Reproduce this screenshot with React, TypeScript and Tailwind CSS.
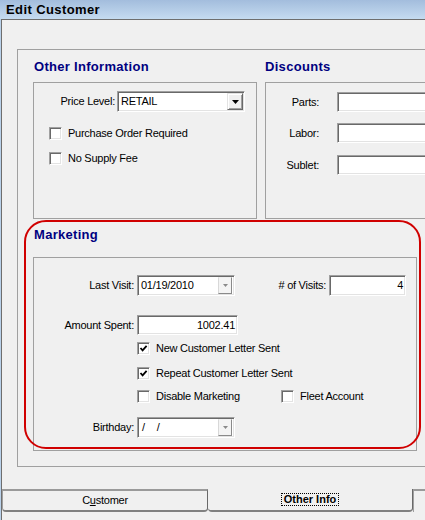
import React from "react";

const sunken =
  "bg-white border border-t-[#a0a0a0] border-l-[#a0a0a0] border-b-white border-r-white shadow-[inset_1px_1px_0_#696969,inset_-1px_-1px_0_#e3e3e3]";
const raised =
  "bg-[#f0f0f0] border border-t-[#e3e3e3] border-l-[#e3e3e3] border-b-[#696969] border-r-[#696969] shadow-[inset_1px_1px_0_#ffffff,inset_-1px_-1px_0_#a0a0a0]";

function Check({ checked }: { checked?: boolean }) {
  return (
    <span className={`w-[13px] h-[13px] shrink-0 flex items-center justify-center ${sunken}`}>
      {checked && (
        <svg width="9" height="9" viewBox="0 0 9 9">
          <path d="M1.5 4 L3.6 6.3 L7.6 1.8" fill="none" stroke="#000" strokeWidth="1.8" />
        </svg>
      )}
    </span>
  );
}

function CheckRow({ label, checked }: { label: string; checked?: boolean }) {
  return (
    <div className="flex items-center gap-[6px] h-[13px]">
      <Check checked={checked} />
      <span className="whitespace-nowrap">{label}</span>
    </div>
  );
}

function DateBox({ children }: { children: React.ReactNode }) {
  return (
    <div className={`${sunken} w-[98px] h-[21px] flex items-center justify-between pl-[3px] pr-[2px]`}>
      <span className="flex">{children}</span>
      <span className="w-[14px] h-[17px] flex items-center justify-center bg-[#f4f4f4] border border-t-[#f0f0f0] border-l-[#d8d8d8] border-b-[#8a8a8a] border-r-[#8a8a8a]">
        <svg width="5" height="3" viewBox="0 0 5 3">
          <polygon points="0,0 5,0 2.5,3" fill="#8a8a8a" />
        </svg>
      </span>
    </div>
  );
}

export default function App() {
  return (
    <div className="relative w-[425px] h-[520px] overflow-hidden bg-[#b9d1ea] text-black text-[11px] leading-[13px] tracking-[-0.25px] font-['Liberation_Sans',Arial,sans-serif]">
      <div className="h-[19px] bg-gradient-to-b from-[#a3bddd] to-[#c5dbf0] pl-[6px] text-[13px] leading-[19px] font-bold tracking-[0.4px]">
        Edit Customer
      </div>
      <div className="ml-[1px] h-[501px] bg-[#f0f0f0] border-l border-t border-[#6e6e6e]">
        <div className="ml-[15px] mt-[29px] w-[420px] h-[418px] shrink-0 border border-[#a0a0a0] pl-[15px] pt-[9px]">
          <div className="flex">
            <div className="w-[224px] shrink-0">
              <div className="h-[16px] mb-[7px] pl-[1px] text-[13px] leading-[16px] font-bold tracking-[0.3px] text-[#000080]">
                Other Information
              </div>
              <div className="h-[137px] border border-[#a0a0a0] pt-[8px]">
                <div className="flex items-center">
                  <span className="w-[81px] shrink-0 text-right">Price Level:</span>
                  <div className={`${sunken} ml-[2px] w-[128px] h-[21px] flex items-center justify-between pl-[3px] pr-[1px]`}>
                    <span>RETAIL</span>
                    <span className={`${raised} w-[16px] h-[17px] flex items-center justify-center`}>
                      <svg width="7" height="4" viewBox="0 0 7 4">
                        <polygon points="0,0 7,0 3.5,4" fill="#000" />
                      </svg>
                    </span>
                  </div>
                </div>
                <div className="pl-[15px] mt-[15px]">
                  <CheckRow label="Purchase Order Required" />
                </div>
                <div className="pl-[15px] mt-[12px]">
                  <CheckRow label="No Supply Fee" />
                </div>
              </div>
            </div>
            <div className="ml-[8px] w-[200px] shrink-0">
              <div className="h-[16px] mb-[7px] text-[13px] leading-[16px] font-bold tracking-[0.3px] text-[#000080]">
                Discounts
              </div>
              <div className="h-[137px] border border-[#a0a0a0] pt-[9px]">
                {["Parts:", "Labor:", "Sublet:"].map((l, i) => (
                  <div key={l} className={`flex items-center ${i === 1 ? "mt-[11px]" : i === 2 ? "mt-[12px]" : ""}`}>
                    <span className="w-[53px] shrink-0 text-right">{l}</span>
                    <div className={`${sunken} ml-[18px] w-[100px] h-[20px] shrink-0`} />
                  </div>
                ))}
              </div>
            </div>
          </div>

          <div className="mt-[8px] h-[16px] mb-[14px] pl-[1px] text-[13px] leading-[16px] font-bold tracking-[0.3px] text-[#000080]">
            Marketing
          </div>
          <div className="w-[384px] h-[194px] border border-[#a0a0a0] pt-[17px]">
            <div className="flex items-center">
              <span className="w-[100px] shrink-0 text-right">Last Visit:</span>
              <div className="ml-[3px] shrink-0">
                <DateBox>01/19/2010</DateBox>
              </div>
              <span className="w-[91px] shrink-0 text-right"># of Visits:</span>
              <div className={`${sunken} ml-[3px] w-[77px] h-[21px] shrink-0 flex items-center justify-end pr-[2px]`}>4</div>
            </div>
            <div className="flex items-center mt-[19px]">
              <span className="w-[100px] shrink-0 text-right">Amount Spent:</span>
              <div className={`${sunken} ml-[3px] w-[101px] h-[20px] shrink-0 flex items-center justify-end pr-[2px]`}>1002.41</div>
            </div>
            <div className="ml-[103px] mt-[7px]">
              <CheckRow label="New Customer Letter Sent" checked />
            </div>
            <div className="ml-[103px] mt-[12px]">
              <CheckRow label="Repeat Customer Letter Sent" checked />
            </div>
            <div className="ml-[103px] mt-[10px] flex">
              <div className="w-[144px] shrink-0">
                <CheckRow label="Disable Marketing" />
              </div>
              <CheckRow label="Fleet Account" />
            </div>
            <div className="flex items-center mt-[14px]">
              <span className="w-[100px] shrink-0 text-right">Birthday:</span>
              <div className="ml-[3px] shrink-0">
                <DateBox>
                  <span className="ml-[1px]">/</span>
                  <span className="ml-[12px]">/</span>
                </DateBox>
              </div>
            </div>
          </div>
        </div>

        <div className="mt-[22px] flex">
          <div className="w-[206px] h-[23px] shrink-0 border-t-2 border-t-[#9a9a9a] border-l border-l-[#a0a0a0] border-r border-r-[#696969] border-b-2 border-b-[#808080] rounded-b-[4px] flex items-center justify-center">
            <span>
              C<span className="underline">u</span>stomer
            </span>
          </div>
          <div className="w-[205px] h-[23px] shrink-0 border-r border-r-[#696969] border-b-2 border-b-[#808080] rounded-b-[4px] flex items-center justify-center">
            <span className="font-bold border border-dotted border-black px-[2px] leading-[11px] tracking-[0px]">Other Info</span>
          </div>
          <div className="w-[40px] h-[23px] shrink-0 border-t-2 border-t-[#9a9a9a] border-l border-l-[#a0a0a0]" />
        </div>
      </div>

      <div className="absolute left-[24px] top-[220px] w-[397px] h-[229px] border-2 border-[#d00000] rounded-[22px] pointer-events-none" />
    </div>
  );
}
